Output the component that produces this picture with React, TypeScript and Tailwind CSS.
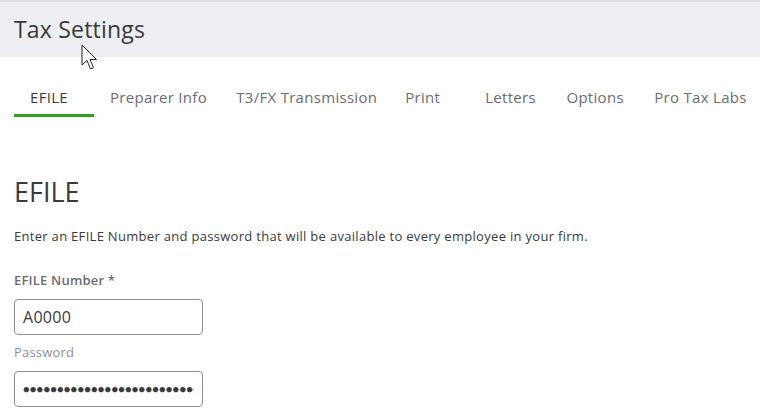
import React from "react";

const tabs = ["EFILE", "Preparer Info", "T3/FX Transmission", "Print", "Letters", "Options", "Pro Tax Labs"];

export default function App() {
  return (
    <div className="relative w-[760px] h-[415px] overflow-hidden bg-white" style={{ fontFamily: "'Open Sans', Lato, sans-serif" }}>
      <div className="h-[57px] bg-[#eceef1] border-t-2 border-[#dcdde0] flex items-center px-[14px]">
        <h1 className="text-[23px] tracking-[0.2px] text-[#393a3d] leading-none">Tax Settings</h1>
      </div>
      <div className="flex pl-[14px] mt-[30px] text-[15px] tracking-[0.3px] leading-[20px] text-[#6b6c72] whitespace-nowrap">
        {tabs.map((t, i) => (
          <div key={t} className={`min-w-[80px] pl-4 pr-4 pb-[7px] border-b-[3px] ${i === 0 ? "border-[#2ca01c] text-[#393a3d]" : "border-transparent"}`}>
            {t}
          </div>
        ))}
      </div>
      <div className="px-[14px]">
        <h2 className="mt-[60px] text-[27px] leading-[30px] text-[#393a3d]">EFILE</h2>
        <p className="mt-[20px] text-[13px] tracking-[0.3px] leading-[18px] text-[#393a3d]">Enter an EFILE Number and password that will be available to every employee in your firm.</p>
        <div className="mt-[26px] text-[13px] tracking-[0.2px] leading-[18px] font-semibold text-[#6b6c72]">EFILE Number *</div>
        <div className="mt-[10px] w-[189px] h-[36px] border border-[#8d9096] rounded-[4px] flex items-center px-[8px] text-[16px] tracking-[0.3px] text-[#393a3d]">A0000</div>
        <div className="mt-[8px] text-[13px] tracking-[0.2px] leading-[18px] text-[#8d9096]">Password</div>
        <div className="mt-[10px] w-[189px] h-[36px] border border-[#8d9096] rounded-[4px] flex items-center px-[8px]">
          <div className="w-full overflow-hidden whitespace-nowrap text-[11px] tracking-[0.2px] text-[#393a3d]">
            ●●●●●●●●●●●●●●●●●●●●●●●●●●
          </div>
        </div>
      </div>
      <svg className="absolute left-[81px] top-[44px]" width="18" height="28" viewBox="0 0 18 28">
        <path d="M1 1 L1 21 L6 16.5 L9.5 25 L12.5 23.7 L9 15.5 L15.5 15.5 Z" fill="white" stroke="#222" strokeWidth="1" strokeLinejoin="round" />
      </svg>
    </div>
  );
}
